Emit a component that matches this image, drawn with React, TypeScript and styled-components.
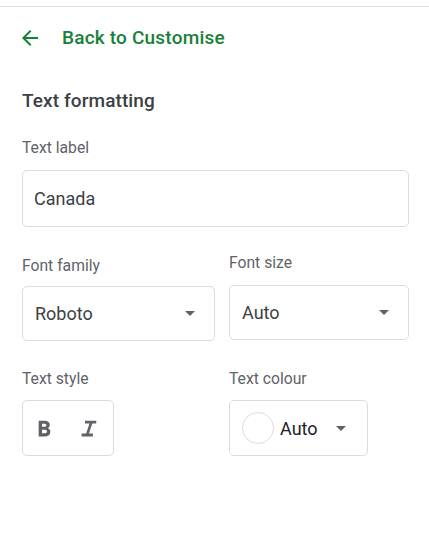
import React from "react";
import styled, { createGlobalStyle } from "styled-components";

const Global = createGlobalStyle`
  html, body { margin: 0; padding: 0; background: #ffffff; }
  body { font-family: Roboto, "Noto Sans", Arial, sans-serif; -webkit-font-smoothing: antialiased; }
  * { box-sizing: border-box; }
`;

const Panel = styled.div`
  width: 429px;
  min-height: 534px;
  background: #fff;
  display: flex;
  flex-direction: column;
`;

const Divider = styled.div`
  height: 1px;
  margin-top: 6px;
  background: #e0e0e0;
`;

const Body = styled.div`
  display: flex;
  flex-direction: column;
  padding: 0 20px 0 22px;
`;

const BackRow = styled.button`
  display: flex;
  align-items: center;
  gap: 20px;
  margin: 18px 0 0 -4px;
  padding: 0;
  height: 24px;
  border: none;
  background: none;
  color: #188038;
  font-family: Roboto, sans-serif;
  font-size: 19px;
  font-weight: 500;
  letter-spacing: 0.2px;
  cursor: pointer;
  text-align: left;
`;

const BackIcon = styled.svg`
  width: 24px;
  height: 24px;
  fill: #188038;
  flex: none;
  margin-top: 2px;
`;

const Title = styled.h2`
  margin: 41px 0 0;
  font-size: 19px;
  line-height: 22px;
  font-weight: 500;
  color: #3c4043;
  letter-spacing: 0.1px;
`;

const Label = styled.div<{ $top: number }>`
  margin-top: ${(p) => p.$top}px;
  font-size: 15.7px;
  line-height: 18px;
  color: #5f6368;
`;

const Box = styled.div<{ $top: number; $height: number; $width?: number }>`
  margin-top: ${(p) => p.$top}px;
  height: ${(p) => p.$height}px;
  width: ${(p) => (p.$width ? `${p.$width}px` : "100%")};
  border: 1px solid #dadce0;
  border-radius: 5px;
  display: flex;
  align-items: center;
  color: #3c4043;
  font-size: 18px;
`;

const InputText = styled.span`
  padding-left: 11px;
  color: #3c4043;
`;

const SelectBox = styled(Box)`
  justify-content: space-between;
  padding: 0 19px 0 12px;
`;

const Caret = styled.span`
  width: 0;
  height: 0;
  border-left: 5.5px solid transparent;
  border-right: 5.5px solid transparent;
  border-top: 5px solid #5f6368;
  flex: none;
`;

const Row = styled.div<{ $cols: string }>`
  display: grid;
  grid-template-columns: ${(p) => p.$cols};
  column-gap: 14px;
`;

const Column = styled.div`
  display: flex;
  flex-direction: column;
`;

const StyleBox = styled(Box)`
  padding: 0 3px;
  gap: 9px;
`;

const IconButton = styled.button`
  width: 36px;
  height: 36px;
  border: none;
  background: none;
  padding: 0;
  display: flex;
  align-items: center;
  justify-content: center;
  cursor: pointer;
`;

const StyleIcon = styled.svg`
  width: 27px;
  height: 27px;
  fill: #5f6368;
`;

const ColourBox = styled(Box)`
  padding: 0 18px 0 12px;
`;

const Swatch = styled.span`
  width: 32px;
  height: 32px;
  border-radius: 50%;
  border: 1px solid #dadce0;
  background: #fff;
  flex: none;
`;

const ColourText = styled.span`
  margin-left: 6px;
  margin-right: 18px;
  color: #202124;
`;

export default function App() {
  return (
    <>
      <Global />
      <Panel>
        <Divider />
        <Body>
          <BackRow>
            <BackIcon viewBox="0 0 24 24">
              <path d="M20 11H7.83l5.59-5.59L12 4l-8 8 8 8 1.41-1.41L7.83 13H20v-2z" />
            </BackIcon>
            Back to Customise
          </BackRow>

          <Title>Text formatting</Title>

          <Label $top={27}>Text label</Label>
          <Box $top={13} $height={57}>
            <InputText>Canada</InputText>
          </Box>

          <Row $cols="193px 180px">
            <Column>
              <Label $top={30}>Font family</Label>
              <SelectBox $top={11} $height={55}>
                <span>Roboto</span>
                <Caret />
              </SelectBox>
            </Column>
            <Column>
              <Label $top={27}>Font size</Label>
              <SelectBox $top={13} $height={55}>
                <span>Auto</span>
                <Caret />
              </SelectBox>
            </Column>
          </Row>

          <Row $cols="193px 180px">
            <Column>
              <Label $top={29}>Text style</Label>
              <StyleBox $top={12} $height={56} $width={92}>
                <IconButton aria-label="Bold">
                  <StyleIcon viewBox="0 -960 960 960">
                    <path d="M272-200v-560h221q65 0 120 40t55 111q0 51-23 78.5T602-491q25 11 55.5 41t30.5 90q0 89-65 124.5T501-200H272Zm121-112h104q48 0 58.5-24.5T566-372q0-11-10.5-35.5T494-432H393v120Zm0-228h93q33 0 48-17t15-38q0-24-17-39t-44-15h-95v109Z" />
                  </StyleIcon>
                </IconButton>
                <IconButton aria-label="Italic">
                  <StyleIcon viewBox="0 -960 960 960">
                    <path d="M200-200v-100h160l120-360H320v-100h400v100H580L460-300h140v100H200Z" />
                  </StyleIcon>
                </IconButton>
              </StyleBox>
            </Column>
            <Column>
              <Label $top={29}>Text colour</Label>
              <ColourBox $top={12} $height={56} $width={139}>
                <Swatch />
                <ColourText>Auto</ColourText>
                <Caret />
              </ColourBox>
            </Column>
          </Row>
        </Body>
      </Panel>
    </>
  );
}
